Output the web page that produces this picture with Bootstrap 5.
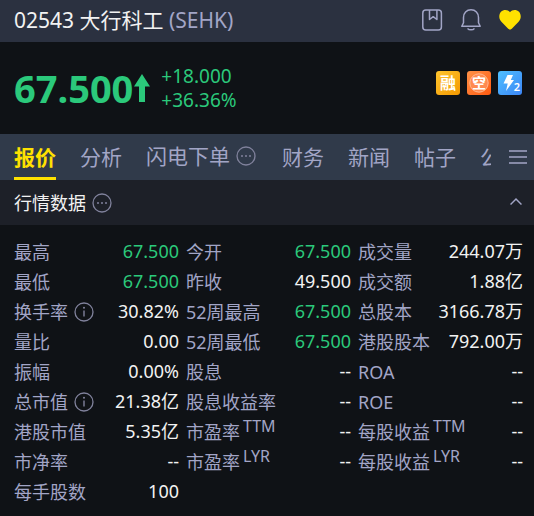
<!DOCTYPE html>
<html lang="zh-CN">
<head>
<meta charset="utf-8">
<meta name="viewport" content="width=device-width, initial-scale=1">
<title>02543 大行科工</title>
<link href="https://cdn.jsdelivr.net/npm/bootstrap@5.3.0/dist/css/bootstrap.min.css" rel="stylesheet">
<style>
:root{--up:#2bc97b;--muted:#a2a5c6;--hint:#80829c;--accent:#ffe100}
body{background:#0f1216;color:#f2f2f2;font-family:"Noto Sans","Noto Sans CJK SC",sans-serif;font-size:18px;line-height:30px}
svg{display:block;fill:none}
.line{stroke:currentColor}
.muted{color:var(--muted)}
.hint{color:var(--hint);margin-left:6px}
.up{color:var(--up)}
.edge{padding-left:14px;padding-right:12px}
.plain{background:none;border:0;padding:0;color:var(--muted)}
.titlebar{background:#2b3140;height:42px;font-size:21px;padding-bottom:2px}
.titlebar h1{font-size:21px;line-height:30px;font-weight:400}
.tools{gap:15px}
.quote{height:92px}
.price{font-size:38px;line-height:48px;font-weight:700}
.change{font-size:19px;line-height:24px;margin-left:10px}
.tags{gap:7px;padding-bottom:10px}
.tabbar{background:#303a4a;height:46px;font-size:21px;line-height:46px}
.tabs{gap:24px;padding-left:14px;min-width:0}
.tabs a{color:var(--muted);text-decoration:none;height:46px;border-bottom:3px solid transparent}
.tabs a.active{color:var(--accent);font-weight:700;border-color:var(--accent)}
.tabs .hint{margin-right:2px}
.more{width:43px;padding-left:18px}
.section-head{background:#1d2028;height:45px}
.section-head h2{font-size:18px;line-height:30px;font-weight:400}
.figures{padding:12px 4px 9px 14px}
.figures table{table-layout:fixed;width:100%}
.figures th{width:14%;font-weight:400;color:var(--muted);white-space:nowrap;padding:0}
.figures td{text-align:right;padding:0 7px 2px 0;line-height:28px;white-space:nowrap}
.figures tr{height:30px}
.figures sup{font-size:16px;line-height:0;top:-7px;margin-left:3px}
</style>
<script src="https://cdn.jsdelivr.net/npm/bootstrap@5.3.0/dist/js/bootstrap.bundle.min.js"></script>
</head>
<body>
<svg class="d-none" aria-hidden="true">
<symbol id="dots" viewBox="0 0 20 20"><circle cx="10" cy="10" r="9" stroke-width="1.300"/><g fill="currentColor" stroke="none"><circle cx="6" cy="10" r="1"/><circle cx="10" cy="10" r="1"/><circle cx="14" cy="10" r="1"/></g></symbol>
<symbol id="info" viewBox="0 0 20 20"><circle cx="10" cy="10" r="9" stroke-width="1.300"/><path d="M10 8.500v6" stroke-width="1.400"/><circle cx="10" cy="5.800" r="1" fill="currentColor" stroke="none"/></symbol>
</svg>
<header class="titlebar edge d-flex align-items-center justify-content-between">
<h1 class="m-0">02543 大行科工 <span class="muted">(SEHK)</span></h1>
<div class="tools d-flex align-items-center">
<button class="plain" aria-label="笔记"><svg class="line" width="24" height="24" viewBox="0 0 24 24" stroke-width="1.500" stroke-linejoin="round"><rect x="2.800" y="2" width="18.600" height="20" rx="3"/><path d="M9.500 2v9.500l3.700-2.800 3.700 2.800V2"/></svg></button>
<button class="plain" aria-label="提醒"><svg class="line" width="24" height="24" viewBox="0 0 24 24" stroke-width="1.500" stroke-linecap="round" stroke-linejoin="round"><path d="M12 1.800c-4.500 0-7.500 3.200-7.500 7.600v5.300L2.800 18.300h18.400l-1.700-3.600V9.400c0-4.400-3-7.600-7.500-7.600zM9 20.800c.8 1.400 5.200 1.400 6 0"/></svg></button>
<button class="plain" aria-label="自选"><svg width="24" height="24" viewBox="0 0 24 24"><path fill="#ffe100" d="M12 4.200C9.800 1.300 5.500 1.200 3 3.800c-2.500 3-2.200 7 .4 9.900l6.800 7.100c1.200 1.100 2.400 1.100 3.600 0l6.800-7.100c2.600-2.900 2.900-6.900.4-9.900C18.500 1.200 14.200 1.300 12 4.200z"/></svg></button>
</div>
</header>
<main>
<section class="quote edge d-flex align-items-center">
<div class="price up d-flex align-items-center">67.500<svg width="18" height="30" viewBox="0 0 18 30"><path fill="currentColor" d="M9 1l8 12.500h-5V29H6V13.500H1z"/></svg></div>
<div class="change up"><div>+18.000</div><div>+36.36%</div></div>
<div class="tags d-flex ms-auto">
<svg width="24" height="24" viewBox="0 0 24 24" role="img" aria-label="融资"><defs><linearGradient id="g1" x2="1" y2="1"><stop stop-color="#ffc52e"/><stop offset="1" stop-color="#f39800"/></linearGradient><linearGradient id="g2" x2="1" y2="1"><stop stop-color="#ff9248"/><stop offset="1" stop-color="#ff5a10"/></linearGradient><linearGradient id="g3" x2="1" y2="1"><stop stop-color="#4fc0ff"/><stop offset="1" stop-color="#3c86f6"/></linearGradient></defs><rect width="24" height="24" rx="3" fill="url(#g1)"/><text x="12" y="18" font-size="16" font-weight="700" text-anchor="middle" fill="#fff">融</text></svg>
<svg width="24" height="24" viewBox="0 0 24 24" role="img" aria-label="卖空"><rect width="24" height="24" rx="3" fill="url(#g2)"/><circle cx="12" cy="12" r="9.200" fill="#ff8a50" stroke="#ffb890"/><text x="12" y="17" font-size="14" font-weight="700" text-anchor="middle" fill="#fff">空</text></svg>
<svg width="24" height="24" viewBox="0 0 24 24" role="img" aria-label="二级行情"><rect width="24" height="24" rx="3" fill="url(#g3)"/><path fill="#fff" d="M9.500 4h5.500l-2.200 5h3.200L8 20l1.700-7.500H5.500z"/><text x="19" y="20" font-size="11" font-weight="600" text-anchor="middle" fill="#fff">2</text></svg>
</div>
</section>
<nav class="tabbar d-flex" aria-label="栏目">
<div class="tabs d-flex flex-grow-1 overflow-hidden text-nowrap">
<a href="#" class="active" aria-current="page">报价</a><a href="#">分析</a><a href="#" class="d-flex align-items-center">闪电下单<svg class="line hint" width="20" height="20"><use href="#dots"/></svg></a><a href="#">财务</a><a href="#">新闻</a><a href="#">帖子</a><a href="#">公告</a>
</div>
<button class="plain more flex-shrink-0" aria-label="更多"><svg class="line" width="18" height="16" viewBox="0 0 18 16" stroke-width="1.700"><path d="M0 2h18M0 8h18M0 14h18"/></svg></button>
</nav>
<div class="section-head edge d-flex align-items-center justify-content-between">
<div class="d-flex align-items-center"><h2 class="m-0">行情数据</h2><svg class="line hint" width="20" height="20"><use href="#dots"/></svg></div>
<button class="plain" aria-label="收起"><svg class="line" width="12" height="12" viewBox="0 0 12 12" stroke-width="1.500"><path d="M0.500 7.500L6 2 11.500 7.500"/></svg></button>
</div>
<section class="figures">
<table>
<tr><th scope="row">最高</th><td class="up">67.500</td><th scope="row">今开</th><td class="up">67.500</td><th scope="row">成交量</th><td>244.07万</td></tr>
<tr><th scope="row">最低</th><td class="up">67.500</td><th scope="row">昨收</th><td>49.500</td><th scope="row">成交额</th><td>1.88亿</td></tr>
<tr><th scope="row"><span class="d-flex align-items-center">换手率<svg class="line hint flex-shrink-0" width="20" height="20"><use href="#info"/></svg></span></th><td>30.82%</td><th scope="row">52周最高</th><td class="up">67.500</td><th scope="row">总股本</th><td>3166.78万</td></tr>
<tr><th scope="row">量比</th><td>0.00</td><th scope="row">52周最低</th><td class="up">67.500</td><th scope="row">港股股本</th><td>792.00万</td></tr>
<tr><th scope="row">振幅</th><td>0.00%</td><th scope="row">股息</th><td>--</td><th scope="row">ROA</th><td>--</td></tr>
<tr><th scope="row"><span class="d-flex align-items-center">总市值<svg class="line hint flex-shrink-0" width="20" height="20"><use href="#info"/></svg></span></th><td>21.38亿</td><th scope="row">股息收益率</th><td>--</td><th scope="row">ROE</th><td>--</td></tr>
<tr><th scope="row">港股市值</th><td>5.35亿</td><th scope="row">市盈率<sup>TTM</sup></th><td>--</td><th scope="row">每股收益<sup>TTM</sup></th><td>--</td></tr>
<tr><th scope="row">市净率</th><td>--</td><th scope="row">市盈率<sup>LYR</sup></th><td>--</td><th scope="row">每股收益<sup>LYR</sup></th><td>--</td></tr>
<tr><th scope="row">每手股数</th><td>100</td></tr>
</table>
</section>
</main>
</body>
</html>
